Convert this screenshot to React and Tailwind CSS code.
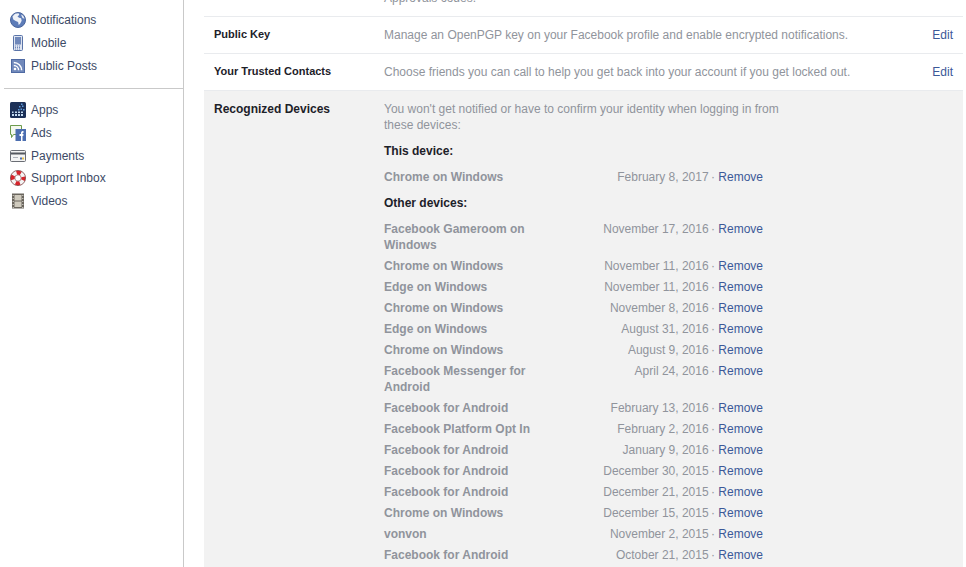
import React from 'react';

const GlobeIcon = () => (
  <svg width="16" height="16" viewBox="0 0 16 16">
    <circle cx="8" cy="8" r="7.5" fill="#5d7cb8" stroke="#4a659c" />
    <path d="M2.5 4.5L5 1.8l3.5-.6.8 1.6-1.8 1.6 1.6 1.3 2 .6.6 2.4-1.6 3-1.4 1.2-.6-3-2.4-1-2.4-1.4z" fill="#eef1f7" />
    <path d="M11 2.5l2.2 1.2 1.3 3-2-.8z" fill="#eef1f7" />
  </svg>
);

const MobileIcon = () => (
  <svg width="16" height="16" viewBox="0 0 16 16">
    <rect x="3.5" y="0.5" width="9" height="15" rx="1" fill="#dfe5f1" stroke="#5a74a8" />
    <rect x="5" y="2" width="6" height="7.5" fill="#7088ba" />
    <path d="M5 11h6M5 12.5h6M5 14h6" stroke="#7088ba" strokeDasharray="1 1" />
  </svg>
);

const RssIcon = () => (
  <svg width="16" height="16" viewBox="0 0 16 16">
    <rect x="1.5" y="1.5" width="13" height="13" fill="#7189bb" stroke="#4f6aa3" />
    <circle cx="5" cy="11" r="1.3" fill="#fff" />
    <path d="M3.8 7.5a4.8 4.8 0 014.8 4.8M3.8 4.5a7.8 7.8 0 017.8 7.8" fill="none" stroke="#fff" strokeWidth="1.5" />
  </svg>
);

const AppsIcon = () => (
  <svg width="16" height="16" viewBox="0 0 16 16">
    <rect width="16" height="16" rx="1.5" fill="#1c3057" />
    <path d="M2 12h2v2H2zM5 12h2v2H5zM8 12h2v2H8zM11 12h2v2h-2zM2 9.5h1.5V11H2zM5 9.5h2V11H5zM8 9.5h2V11H8zM11 9.5h2V11h-2z" fill="#c5dcf2" />
    <path d="M8 7h1.5v1.5H8zM10.5 6.5H12V8h-1.5zM13 7h1.5v1.5H13zM9 4h1.5v1.5H9zM12 3.5h1.5V5H12zM11 1.5h1.5V3H11z" fill="#5f9bdc" />
  </svg>
);

const AdsIcon = () => (
  <svg width="16" height="16" viewBox="0 0 16 16">
    <path d="M0.5 0.5h11v9h-8l-2 3v-3h-1z" fill="#f4f8ee" stroke="#6d9b4c" />
    <rect x="5.5" y="4" width="10.5" height="12" fill="#4c6eb0" />
    <path d="M11 16v-5H9.5V9H11V7.8C11 6.5 12 6 13.5 6v1.7c-.7 0-1 .2-1 .7V9h1l-.2 2h-.8v5z" fill="#fff" />
  </svg>
);

const PaymentsIcon = () => (
  <svg width="16" height="16" viewBox="0 0 16 16">
    <rect x="0.5" y="2.5" width="15" height="11" rx="1" fill="#f4f4f4" stroke="#6a6d74" />
    <rect x="1" y="4.5" width="14" height="2" fill="#55585f" />
    <path d="M3 9.5h5" stroke="#aeb2ba" />
    <path d="M10 10.5h2" stroke="#4c6eb0" strokeWidth="2" />
    <path d="M12 10.5h2" stroke="#e8c14a" strokeWidth="2" />
  </svg>
);

const SupportIcon = () => (
  <svg width="16" height="16" viewBox="0 0 16 16">
    <circle cx="8" cy="8" r="5.3" fill="#fff" stroke="#f4f4f4" strokeWidth="4" />
    <circle cx="8" cy="8" r="5.3" fill="none" stroke="#d8232a" strokeWidth="4" strokeDasharray="4.3 4.03" strokeDashoffset="2.1" />
    <circle cx="8" cy="8" r="7.6" fill="none" stroke="#6b2a2a" strokeWidth="0.7" />
    <circle cx="8" cy="8" r="3.2" fill="#fff" stroke="#7a3a3a" strokeWidth="0.6" />
  </svg>
);

const VideosIcon = () => (
  <svg width="16" height="16" viewBox="0 0 16 16">
    <rect x="2" y="0.5" width="12" height="15" fill="#6b665e" />
    <rect x="4.5" y="2" width="7" height="5.5" fill="#cfcabd" />
    <rect x="4.5" y="8.5" width="7" height="5.5" fill="#cfcabd" />
    <path d="M2.7 2h1v1h-1zM2.7 5h1v1h-1zM2.7 8h1v1h-1zM2.7 11h1v1h-1zM2.7 14h1v1h-1zM12.3 2h1v1h-1zM12.3 5h1v1h-1zM12.3 8h1v1h-1zM12.3 11h1v1h-1zM12.3 14h1v1h-1z" fill="#e3e1db" />
  </svg>
);

const SideItem = ({ icon, label, className = 'h-[23px]' }) => (
  <div className={`flex items-center ${className}`}>
    <div className="w-[16px] h-[16px] ml-[10px] mr-[5px] shrink-0">{icon}</div>
    <span className="text-[12px] text-[#3c4a66]">{label}</span>
  </div>
);

const SettingRow = ({ label, text }) => (
  <div className="flex items-center h-[37px] border-b border-[#e9ebee] text-[12px]">
    <div className="w-[180px] pl-[10px] pb-[2px] text-[11px] font-bold text-[#1d2129] shrink-0">{label}</div>
    <div className="flex-1 text-[#90949c]">{text}</div>
    <a className="text-[#3b5998] pr-[10px]">Edit</a>
  </div>
);

const Device = ({ name, date }) => (
  <div className="flex leading-[16px]">
    <div className="w-[150px] font-bold text-[#90949c] shrink-0">{name}</div>
    <div className="w-[229px] text-right text-[#90949c] shrink-0">
      <span className="mr-[-1px]">{date}</span> · <a className="text-[#3b5998]">Remove</a>
    </div>
  </div>
);

const otherDevices = [
  ['Facebook Gameroom on Windows', 'November 17, 2016'],
  ['Chrome on Windows', 'November 11, 2016'],
  ['Edge on Windows', 'November 11, 2016'],
  ['Chrome on Windows', 'November 8, 2016'],
  ['Edge on Windows', 'August 31, 2016'],
  ['Chrome on Windows', 'August 9, 2016'],
  ['Facebook Messenger for Android', 'April 24, 2016'],
  ['Facebook for Android', 'February 13, 2016'],
  ['Facebook Platform Opt In', 'February 2, 2016'],
  ['Facebook for Android', 'January 9, 2016'],
  ['Facebook for Android', 'December 30, 2015'],
  ['Facebook for Android', 'December 21, 2015'],
  ['Chrome on Windows', 'December 15, 2015'],
  ['vonvon', 'November 2, 2015'],
  ['Facebook for Android', 'October 21, 2015'],
];

export default function App() {
  return (
    <div className="flex h-[567px] w-[966px] overflow-hidden bg-white font-['Liberation_Sans',Arial,sans-serif]">
      {/* Sidebar */}
      <div className="w-[184px] shrink-0 border-r border-[#c9c9c9] pt-[8px]">
        <SideItem icon={<GlobeIcon />} label="Notifications" />
        <SideItem icon={<MobileIcon />} label="Mobile" />
        <SideItem icon={<RssIcon />} label="Public Posts" />
        <div className="ml-[4px] mt-[11px] mb-[10px] border-t border-[#c9c9c9]" />
        <SideItem className="h-[21.75px] mb-[0.75px]" icon={<AppsIcon />} label="Apps" />
        <SideItem className="h-[22.75px]" icon={<AdsIcon />} label="Ads" />
        <SideItem className="h-[22.75px]" icon={<PaymentsIcon />} label="Payments" />
        <SideItem className="h-[22.75px]" icon={<SupportIcon />} label="Support Inbox" />
        <SideItem className="h-[22.75px]" icon={<VideosIcon />} label="Videos" />
      </div>

      {/* Security settings */}
      <div className="w-[759px] ml-[20px] shrink-0">
        <div className="flex items-end h-[17px] overflow-hidden border-b border-[#e9ebee] pl-[180px] text-[12px] leading-[16px] text-[#90949c]">
          <div className="mb-[10px]">Approvals codes.</div>
        </div>
        <SettingRow label="Public Key" text="Manage an OpenPGP key on your Facebook profile and enable encrypted notifications." />
        <SettingRow label="Your Trusted Contacts" text="Choose friends you can call to help you get back into your account if you get locked out." />
        <div className="flex bg-[#f2f2f2] text-[12px] leading-[16px] pt-[10px] pb-[40px]">
          <div className="w-[180px] pl-[10px] font-bold text-[#1d2129] shrink-0">Recognized Devices</div>
          <div className="flex-1">
            <div className="w-[400px] text-[#90949c]">
              You won't get notified or have to confirm your identity when logging in from these devices:
            </div>
            <div className="font-bold text-[#1d2129] mt-[10px] mb-[10px]">This device:</div>
            <Device name="Chrome on Windows" date="February 8, 2017" />
            <div className="font-bold text-[#1d2129] mt-[10px] mb-[10px]">Other devices:</div>
            <div className="flex flex-col gap-[5px]">
              {otherDevices.map((d, i) => (
                <Device key={i} name={d[0]} date={d[1]} />
              ))}
            </div>
          </div>
        </div>
      </div>
    </div>
  );
}
